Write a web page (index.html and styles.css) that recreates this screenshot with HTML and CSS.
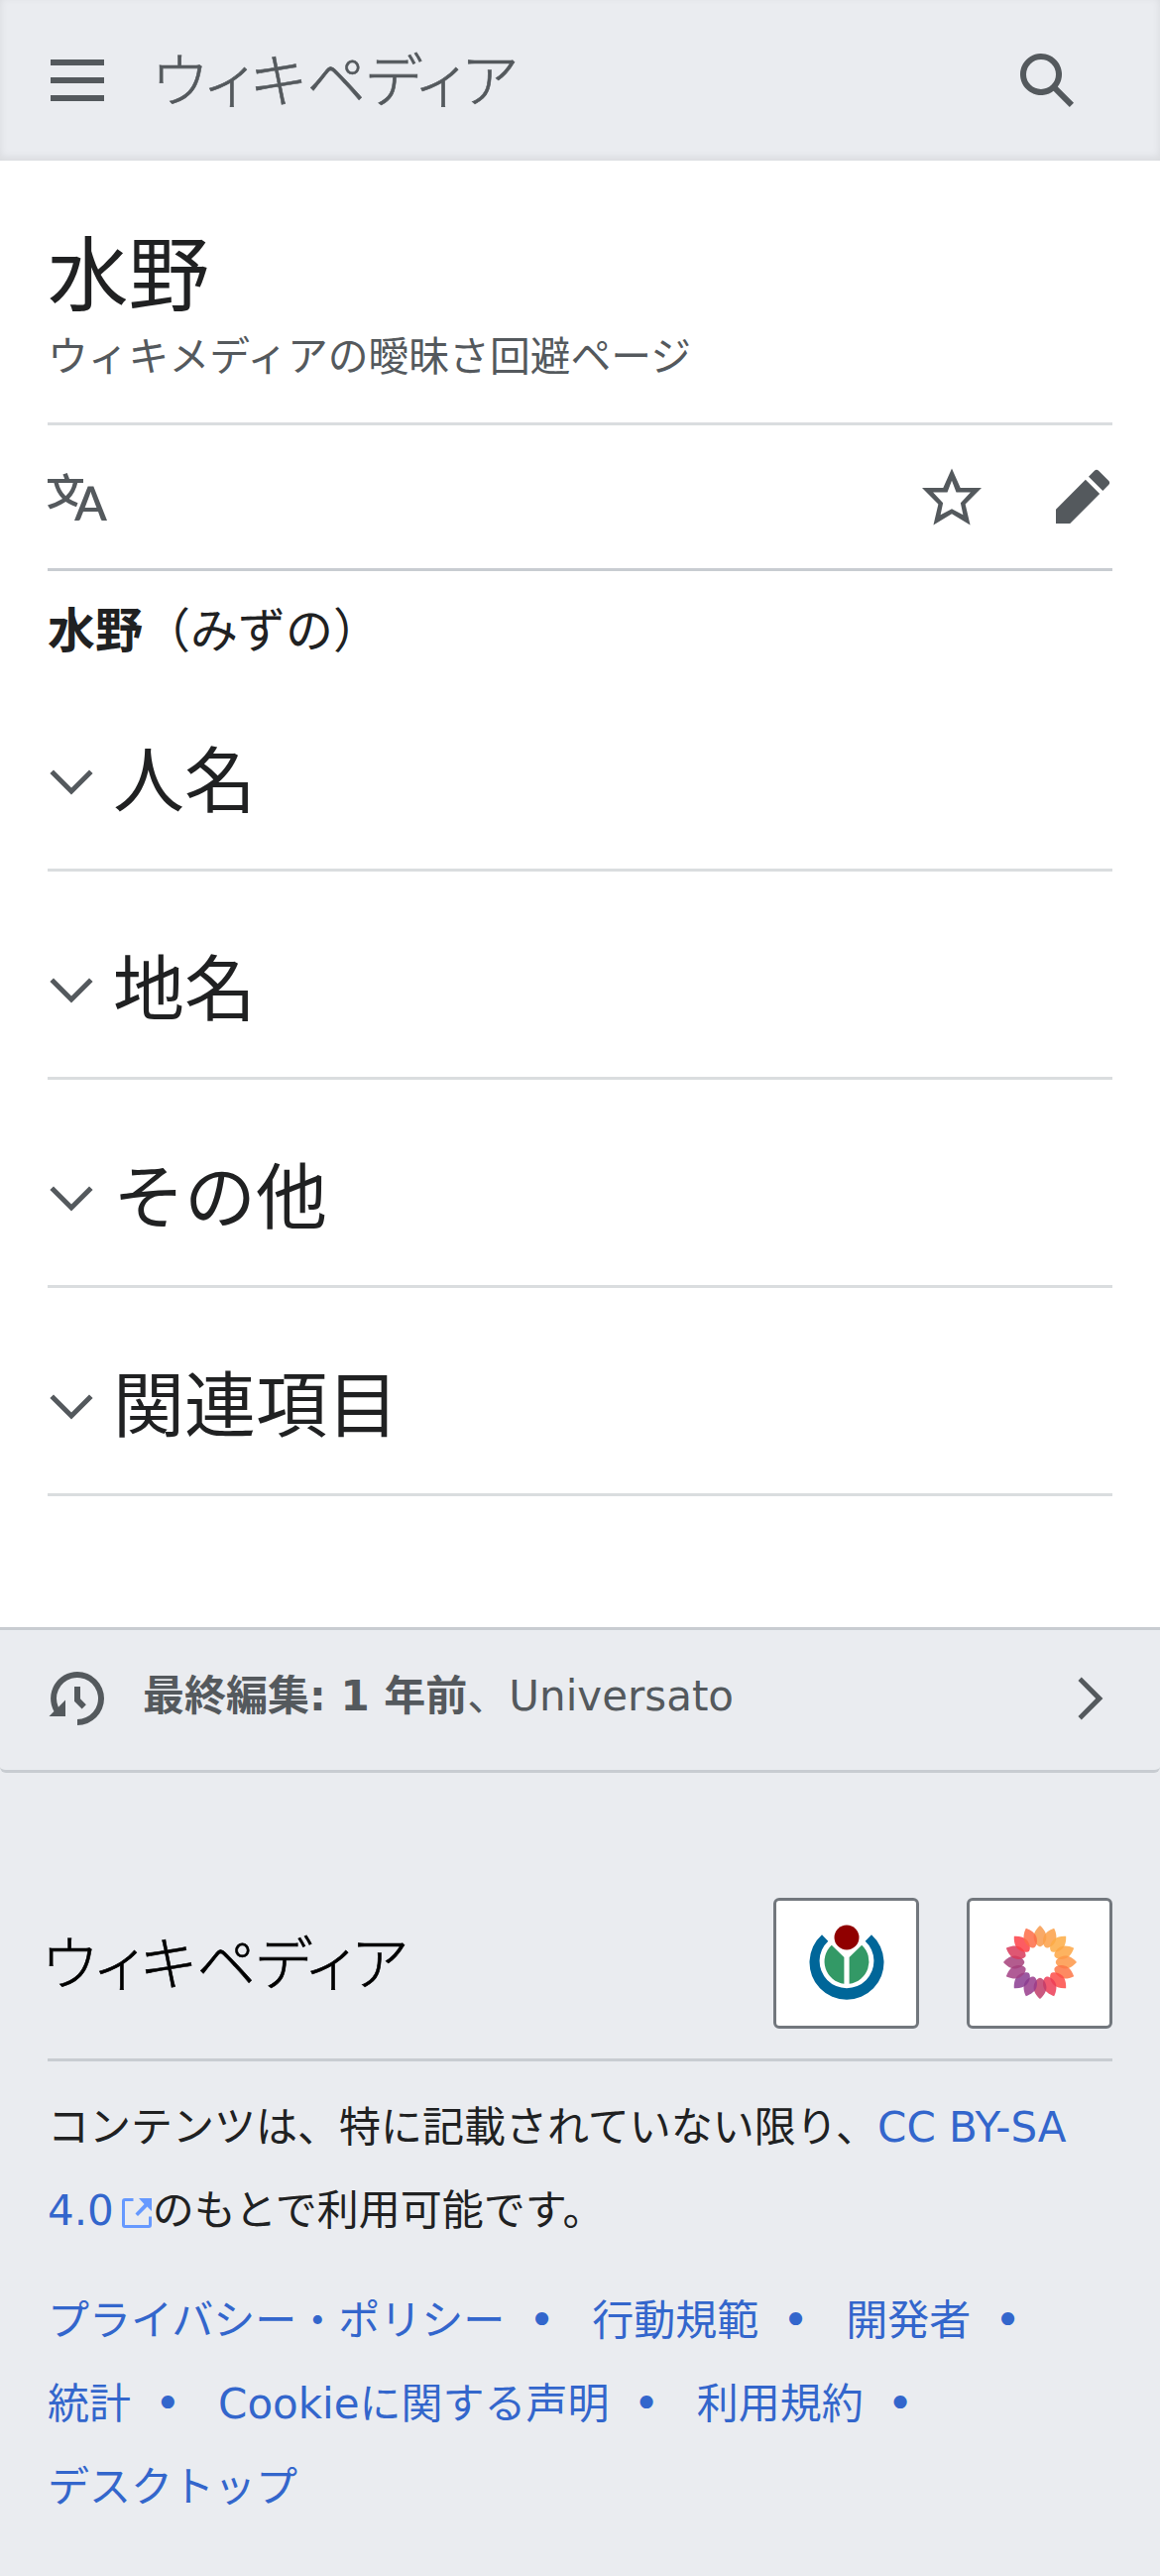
FILE: index.html
```html
<!DOCTYPE html>
<html lang="ja">
<head>
<meta charset="utf-8">
<title>水野 - ウィキペディア</title>
<link rel="stylesheet" href="styles.css">
</head>
<body>
<header class="header">
  <svg class="icon" viewBox="0 0 20 20"><path d="M1 3v2h18V3zm0 8h18V9H1zm0 6h18v-2H1z"/></svg>
  <span class="wordmark">ウィキペディア</span>
  <svg class="icon search" viewBox="0 0 20 20"><path fill-rule="evenodd" d="M12.2 13.6a7 7 0 1 1 1.4-1.4l5.4 5.4-1.4 1.4zM3 8a5 5 0 1 0 10 0A5 5 0 0 0 3 8"/></svg>
</header>
<main class="content">
  <div class="heading">
    <h1 class="title">水野</h1>
    <p class="tagline">ウィキメディアの曖昧さ回避ページ</p>
  </div>
  <nav class="actions">
    <svg class="icon" viewBox="0 0 20 20"><path fill-rule="evenodd" d="M20 18h-1.44a.6.6 0 0 1-.4-.12.8.8 0 0 1-.23-.31L17 15h-5l-1 2.54a.8.8 0 0 1-.22.3.6.6 0 0 1-.4.14H9l4.55-11.47h1.89zm-3.53-4.31L14.89 9.5a12 12 0 0 1-.39-1.24q-.09.37-.19.69l-.19.56-1.58 4.19zm-6.3-1.58a13.4 13.4 0 0 1-2.91-1.41 11.46 11.46 0 0 0 2.81-5.37H12V4H7.31a4 4 0 0 0-.2-.56C6.87 2.79 6.6 2 6.6 2l-1.47.5s.4.89.6 1.5H0v1.33h2.15A11.23 11.23 0 0 0 5 10.7a17.2 17.2 0 0 1-5 2.1q.56.82.87 1.38a23.3 23.3 0 0 0 5.22-2.51 15.6 15.6 0 0 0 3.56 1.77zM3.63 5.33h4.91a8.1 8.1 0 0 1-2.45 4.45 9.1 9.1 0 0 1-2.46-4.45"/></svg>
    <svg class="icon star" viewBox="0 0 20 20"><path fill-rule="evenodd" d="M20 7h-7.1L10 .5 7.1 7H0l5.46 5.47-1.64 7L10 15.77l6.18 3.73-1.63-7zm-10 7.1-3.8 2 .85-4L3.7 8.5h4.8L10 4.6l1.5 3.9h4.8L12.95 12.1l.85 4z"/></svg>
    <svg class="icon" viewBox="0 0 20 20"><path d="m16.77 8 1.94-2a1 1 0 0 0 0-1.41l-3.34-3.3a1 1 0 0 0-1.41 0L12 3.23zM1 14.25V19h4.75l9.96-9.96-4.75-4.75z"/></svg>
  </nav>
  <p class="intro"><b>水野</b>（みずの）</p>
  <h2 class="section"><svg class="chevron" viewBox="0 0 20 20"><path d="m17.5 4.75-7.5 7.5-7.5-7.5L1 6.25l9 9 9-9z"/></svg><span class="section-name">人名</span></h2>
  <h2 class="section"><svg class="chevron" viewBox="0 0 20 20"><path d="m17.5 4.75-7.5 7.5-7.5-7.5L1 6.25l9 9 9-9z"/></svg><span class="section-name">地名</span></h2>
  <h2 class="section"><svg class="chevron" viewBox="0 0 20 20"><path d="m17.5 4.75-7.5 7.5-7.5-7.5L1 6.25l9 9 9-9z"/></svg><span class="section-name">その他</span></h2>
  <h2 class="section"><svg class="chevron" viewBox="0 0 20 20"><path d="m17.5 4.75-7.5 7.5-7.5-7.5L1 6.25l9 9 9-9z"/></svg><span class="section-name">関連項目</span></h2>
</main>
<footer class="footer">
  <div class="modified">
    <svg class="icon" viewBox="0 0 20 20"><path d="M9 6v5h.06l2.48 2.47 1.41-1.41L11 10.11V6z"/><path d="M10 1a9 9 0 0 0-7.85 13.35L.5 16H6v-5.5l-2.38 2.38A7 7 0 1 1 10 17v2a9 9 0 0 0 0-18"/></svg>
    <span class="modified-text"><b>最終編集: 1 年前</b>、Universato</span>
    <svg class="chevron" viewBox="0 0 20 20"><path d="M7 1 5.6 2.5 13 10l-7.4 7.5L7 19l9-9z"/></svg>
  </div>
  <div class="footer-body">
    <div class="brand-row">
      <span class="wordmark wordmark-footer">ウィキペディア</span>
      <a class="badge"><svg class="badge-art" viewBox="-40 -40 80 80">
        <path fill="#069" d="M-25-27.7A37.5 37.5 0 1 0 25-27.7L18.7-21.3A27.4 27.4 0 1 1-18.7-21.3z"/>
        <path fill="#396" d="M-15.2-17.3-2.6-5V21.7A22.6 22.6 0 0 1-15.2-17.3zM15.2-17.3 2.6-5V21.7A22.6 22.6 0 0 0 15.2-17.3z"/>
        <circle fill="#900000" cy="-25" r="12.5"/></svg></a>
      <a class="badge"><svg class="badge-art" viewBox="-40 -40 80 80">
        <defs><path id="petal" d="M0-37C-4-33.500-6.700-29-6.400-25-6-20.500-3.500-17-1-16Q0-15.500 1-16C3.500-17 6-20.500 6.400-25 6.700-29 4-33.500 0-37z"/></defs>
        <g class="petals">
          <use href="#petal" fill="#f79a4c"/>
          <use href="#petal" fill="#fba048" transform="rotate(22.5)"/>
          <use href="#petal" fill="#fdab44" transform="rotate(45)"/>
          <use href="#petal" fill="#fda644" transform="rotate(67.5)"/>
          <use href="#petal" fill="#fd9648" transform="rotate(90)"/>
          <use href="#petal" fill="#fd7646" transform="rotate(112.5)"/>
          <use href="#petal" fill="#fd4c48" transform="rotate(135)"/>
          <use href="#petal" fill="#ec3c56" transform="rotate(157.5)"/>
          <use href="#petal" fill="#c03c6a" transform="rotate(180)"/>
          <use href="#petal" fill="#983c8c" transform="rotate(202.5)"/>
          <use href="#petal" fill="#8a3c90" transform="rotate(225)"/>
          <use href="#petal" fill="#a24084" transform="rotate(247.5)"/>
          <use href="#petal" fill="#a6407a" transform="rotate(270)"/>
          <use href="#petal" fill="#d83a5a" transform="rotate(292.5)"/>
          <use href="#petal" fill="#fd4046" transform="rotate(315)"/>
          <use href="#petal" fill="#fd6c46" transform="rotate(337.5)"/>
        </g></svg></a>
    </div>
    <p class="license">コンテンツは、特に記載されていない限り、<a class="link">CC BY-SA 4.0<svg class="external" viewBox="0 0 30 30"><path d="M17 0h13v13l-4.500-4.500-9.500 9.500-2.500-2.500 9-9.500zM3 0h8.500v3H3v24h24v-8.500h3V27a3 3 0 0 1-3 3H3a3 3 0 0 1-3-3V3a3 3 0 0 1 3-3"/></svg></a>のもとで利用可能です。</p>
    <ul class="places">
      <li class="place">プライバシー・ポリシー</li>
      <li class="place">行動規範</li>
      <li class="place">開発者</li>
      <li class="place">統計</li>
      <li class="place">Cookieに関する声明</li>
      <li class="place">利用規約</li>
      <li class="place">デスクトップ</li>
    </ul>
  </div>
</footer>
</body>
</html>
```
FILE: styles.css
```css
* { box-sizing: border-box; }
body, h1, h2, p, ul { margin: 0; padding: 0; }
body {
  background: #fff;
  color: #202122;
  font-family: "DejaVu Sans", "Noto Sans CJK JP", sans-serif;
  font-size: 48px;
}
svg { display: block; flex: none; }
.icon { width: 60px; height: 60px; fill: #54595d; }
.chevron { width: 48px; height: 48px; fill: #54595d; }

.header {
  display: flex;
  align-items: center;
  height: 162px;
  padding: 0 84px 0 48px;
  background: #eaecf0;
  box-shadow: inset 0 -3px 9px rgba(0, 0, 0, .08);
}
.wordmark {
  margin-left: 46px;
  padding-bottom: 6px;
  font-family: "Noto Sans CJK JP", sans-serif;
  font-size: 59.4px;
  font-weight: 300;
  line-height: 1;
  font-feature-settings: "palt";
  -webkit-text-stroke: .6px currentColor;
  white-space: nowrap;
  color: #54595d;
}
.search { margin-left: auto; }

.content { height: 1479px; padding: 0 48px; }
.heading { height: 267px; padding-top: 65px; border-bottom: 3px solid #dadddf; }
.title { font-size: 81.6px; font-weight: 400; line-height: 103px; }
.tagline { font-size: 40.8px; line-height: 61px; color: #54595d; }
.actions {
  display: flex;
  align-items: center;
  gap: 72px;
  height: 147px;
  border-bottom: 3px solid #c8ccd1;
}
.star { margin-left: auto; }
.intro { height: 93px; padding-top: 21px; line-height: 79px; }
.section {
  display: flex;
  align-items: center;
  gap: 18px;
  height: 210px;
  padding-top: 33px;
  border-bottom: 3px solid #dadddf;
  font-size: 72px;
  font-weight: 400;
  line-height: 94px;
}
.section-name { padding-bottom: 2px; }

.footer { height: 957px; background: #eaecf0; }
.modified {
  display: flex;
  align-items: center;
  height: 147px;
  padding: 0 48px 3px;
  border-top: 3px solid #c8ccd1;
  border-bottom: 3px solid #c8ccd1;
  border-radius: 0 0 6px 6px;
  font-size: 42px;
  color: #54595d;
}
.modified-text { flex: 1; margin-left: 36px; padding-bottom: 14px; }
.footer-body { padding: 126px 48px 0; }
.brand-row {
  display: flex;
  align-items: center;
  gap: 48px;
  height: 165px;
  padding-bottom: 30px;
  border-bottom: 3px solid #c8ccd1;
}
.wordmark-footer { margin: 0 auto 0 -5px; color: #000; }
.badge {
  display: flex;
  align-items: center;
  justify-content: center;
  width: 147px;
  height: 132px;
  padding-bottom: 3px;
  border: 3px solid #72777d;
  border-radius: 6px;
  background: #fff;
}
.badge-art { width: 80px; height: 80px; }
.petals use { opacity: .85; }
.license { margin-top: 25px; font-size: 42px; line-height: 84px; }
.link { color: #36c; }
.external { display: inline-block; width: 30px; height: 30px; margin: 0 1px 0 8px; fill: #69f; vertical-align: -3px; }
.places {
  display: flex;
  flex-wrap: wrap;
  margin-top: 27px;
  list-style: none;
  font-size: 42px;
  line-height: 84px;
  color: #36c;
}
.place { height: 84px; }
.place:not(:last-child)::after { content: "•"; padding: 0 37.500px 0 24px; font-size: 45px; line-height: 1; }
.place:last-child { flex-basis: 100%; }
```
